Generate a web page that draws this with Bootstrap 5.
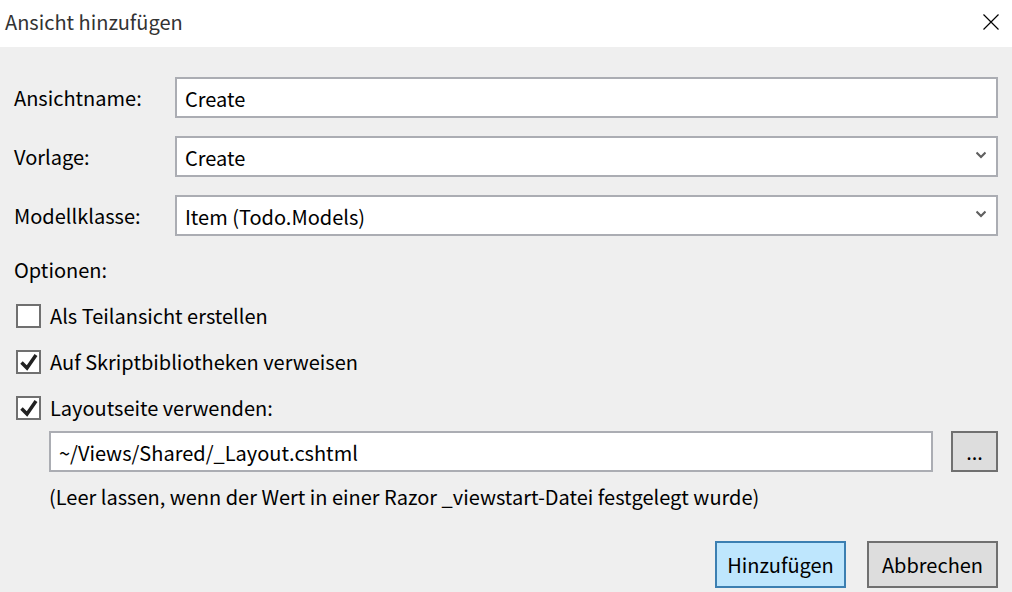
<!DOCTYPE html>
<html lang="de">
<head>
<meta charset="utf-8">
<meta name="viewport" content="width=device-width, initial-scale=1">
<title>Ansicht hinzufügen</title>
<link href="https://cdn.jsdelivr.net/npm/bootstrap@5.3.0/dist/css/bootstrap.min.css" rel="stylesheet">
<style>
  body { font-family: "Segoe UI", "Noto Sans CJK SC", "Open Sans", sans-serif; font-size: 20px; line-height: 28px; color: #000; background: #efefef; }
  .title-bar { height: 47px; padding: 0 13px 4px 5px; }
  .title-bar h1 { font-size: 20px; line-height: 28px; color: #333; font-weight: 400; }
  .close-btn { line-height: 0; padding: 0; border: 0; background: none; }
  .dialog-form { padding: 30px 14px 4px; }
  .field-row { display: grid; grid-template-columns: 161px 1fr; align-items: center; margin-bottom: 18px; }
  .field-box.form-control, .field-box.form-select { height: 41px; padding: 2px 8px 0; border: 2px solid #abadb3; border-radius: 0; font-size: 20px; line-height: 28px; color: #000; background-color: #fff; }
  .field-box.form-select { background-image: url("data:image/svg+xml,%3Csvg xmlns='http://www.w3.org/2000/svg' viewBox='0 0 10 8'%3E%3Cpath d='M.5 1.500L5 6l4.500-4.500' fill='none' stroke='%23606060' stroke-width='2.2'/%3E%3C/svg%3E"); background-size: 10px 8px; background-position: right 10px top 13px; }
  .options-head { margin: 20px 0 18px; }
  .option-row { display: flex; align-items: center; gap: 9px; height: 28px; margin: 0 0 18px 2px; }
  .option-row .form-check-input { flex: none; width: 25px; height: 24px; margin: 0; border: 2px solid #707070; border-radius: 0; background-color: #fff; background-size: 100% 100%; }
  .option-row .form-check-input:checked { background-image: url("data:image/svg+xml,%3Csvg xmlns='http://www.w3.org/2000/svg' viewBox='0 0 21 20'%3E%3Cpath d='M3.500 10.500l5.500 5.500L18 3' fill='none' stroke='%23212121' stroke-width='3.500'/%3E%3C/svg%3E"); }
  .layout-group { padding: 9px 0 0 35px; }
  .layout-group .d-flex { gap: 18px; }
  .hint { margin: 11px 0 30px; }
  .dialog-btn { height: 47px; width: 131px; padding: 0; border: 2px solid #707070; border-radius: 0; background: #ddd; color: #000; font-size: 20px; line-height: 28px; }
  .dialog-btn.default-btn { background: #bee6fd; border-color: #3c7fb1; }
  .dialog-btn.browse-btn { width: 47px; height: 41px; flex: none; }
  .actions { gap: 21px; }
</style>
</head>
<body>
<header class="title-bar d-flex align-items-center justify-content-between bg-white">
  <h1 class="m-0">Ansicht hinzufügen</h1>
  <button type="button" class="close-btn" aria-label="Schließen">
    <svg width="16" height="16" viewBox="0 0 16 16" stroke="#000" stroke-width="1.2"><path d="M.5.500l15 15M15.500.500l-15 15"/></svg>
  </button>
</header>
<main>
<form class="dialog-form">
  <div class="field-row"><label for="name">Ansichtname:</label><input id="name" class="form-control field-box" type="text" value="Create"></div>
  <div class="field-row"><label for="template">Vorlage:</label><select id="template" class="form-select field-box"><option>Create</option></select></div>
  <div class="field-row"><label for="model">Modellklasse:</label><select id="model" class="form-select field-box"><option>Item (Todo.Models)</option></select></div>
  <p class="options-head">Optionen:</p>
  <div class="option-row"><input id="partial" class="form-check-input" type="checkbox"><label for="partial">Als Teilansicht erstellen</label></div>
  <div class="option-row"><input id="scripts" class="form-check-input" type="checkbox" checked><label for="scripts">Auf Skriptbibliotheken verweisen</label></div>
  <div class="option-row mb-0"><input id="layout" class="form-check-input" type="checkbox" checked><label for="layout">Layoutseite verwenden:</label></div>
  <div class="layout-group">
    <div class="d-flex">
      <input class="form-control field-box" type="text" value="~/Views/Shared/_Layout.cshtml" aria-label="Layoutseite">
      <button type="button" class="btn dialog-btn browse-btn" aria-label="Durchsuchen">...</button>
    </div>
    <p class="hint">(Leer lassen, wenn der Wert in einer Razor _viewstart-Datei festgelegt wurde)</p>
  </div>
  <div class="actions d-flex justify-content-end">
    <button type="submit" class="btn dialog-btn default-btn">Hinzufügen</button>
    <button type="button" class="btn dialog-btn">Abbrechen</button>
  </div>
</form>
</main>
<script src="https://cdn.jsdelivr.net/npm/bootstrap@5.3.0/dist/js/bootstrap.bundle.min.js"></script>
</body>
</html>
